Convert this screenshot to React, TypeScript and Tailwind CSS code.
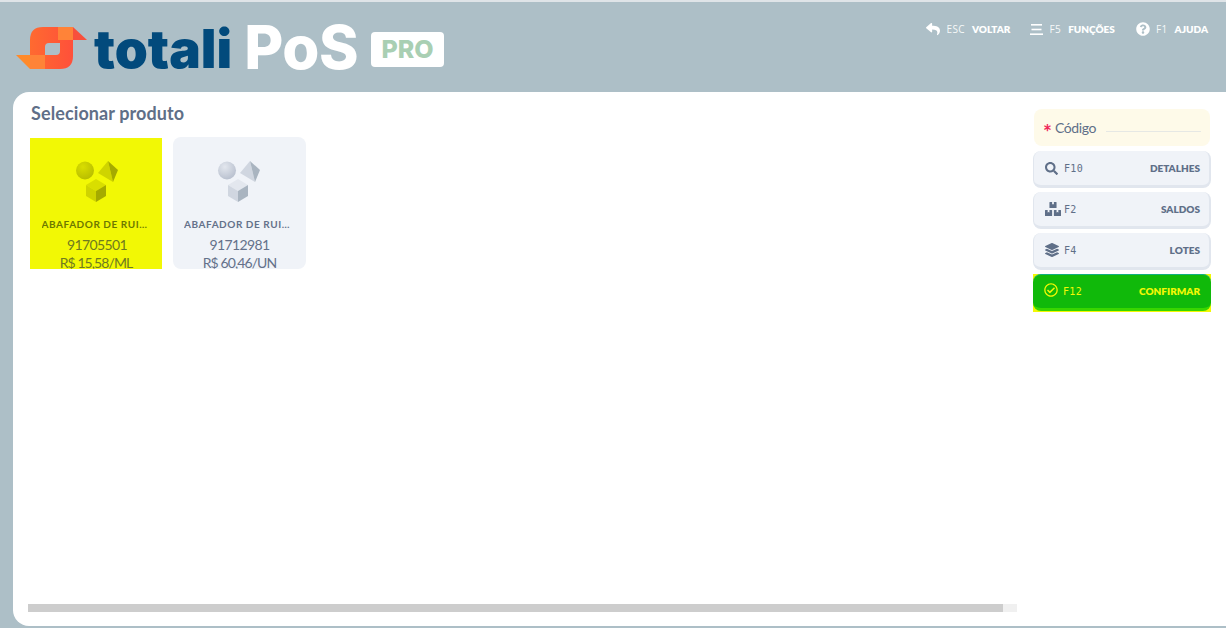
import { FaReply, FaQuestionCircle, FaSearch, FaLayerGroup, FaBoxes, FaRegCheckCircle } from 'react-icons/fa';

const lato = { fontFamily: 'Lato, sans-serif' };

const Shapes = ({ id, sphere, light, mid, dark }: { id: string; sphere: string; light: string; mid: string; dark: string }) => (
  <svg width="44" height="44" viewBox="0 0 44 44">
    <defs>
      <radialGradient id={id} cx="0.38" cy="0.3" r="0.8">
        <stop offset="0" stopColor={light} />
        <stop offset="1" stopColor={sphere} />
      </radialGradient>
    </defs>
    <circle cx="11" cy="10.5" r="9" fill={`url(#${id})`} />
    <polygon points="34,1 24,13 39,22" fill={mid} />
    <polygon points="34,1 44,10 39,22" fill={dark} />
    <polygon points="22,19 32,25 22,31 12,25" fill={light} />
    <polygon points="12,25 22,31 22,42 12,36" fill={mid} />
    <polygon points="32,25 22,31 22,42 32,36" fill={dark} />
  </svg>
);

const ProductCard = ({ code, price, selected }: { code: string; price: string; selected?: boolean }) => (
  <div
    className={
      selected
        ? 'mt-px flex h-[131px] w-[132px] flex-col items-center overflow-hidden bg-[#f2f805] text-[#6f7a20]'
        : 'flex h-[132px] w-[133px] flex-col items-center overflow-hidden rounded-lg bg-[#f0f3f8] text-[#64718a]'
    }
  >
    <div className={selected ? 'mt-[22px] h-[44px] shrink-0' : 'mt-[23px] ml-[-3px] h-[44px] shrink-0'}>
      {selected ? (
        <Shapes id="sel" sphere="#b5ba00" light="#d9de00" mid="#cfd400" dark="#a5aa00" />
      ) : (
        <Shapes id="nor" sphere="#b4bccb" light="#e3e7ee" mid="#d0d6e0" dark="#a9b4c0" />
      )}
    </div>
    <div className={`mt-[13px] w-[112px] shrink-0 truncate text-center text-[10px] font-bold leading-[14px] tracking-[0.55px] ${selected ? 'ml-[3px] text-[#6d7800]' : 'ml-px text-[#64718a]'}`}>
      ABAFADOR DE RUIDO
    </div>
    <div className={`mt-[5px] shrink-0 text-[14px] leading-[18px] tracking-[-0.65px] ${selected ? 'ml-[2px]' : ''}`}>{code}</div>
    <div className="shrink-0 text-[14px] leading-[18px] tracking-[-0.9px]">{price}</div>
  </div>
);

const ActionButton = ({ icon, fkey, label, confirm }: { icon: React.ReactNode; fkey: string; label: string; confirm?: boolean }) => (
  <div className={confirm ? 'h-[38px] w-[178px] bg-[#f2f805]' : 'h-[37px] w-[178px]'}>
    <div
      className={
        confirm
          ? 'flex h-[37px] items-center rounded-lg border-t border-[#10b080] border-b-[3px] border-b-[#38d600] bg-[#10b90a] pl-[11px] pr-[11px] text-[#f2f805]'
          : 'flex h-[37px] items-center rounded-lg border-r-2 border-b-[3px] border-l border-[#e1e6ee] bg-[#f0f3f8] pl-[11px] pr-[9px] text-[#5f6f88]'
      }
    >
      <span className="flex w-[19px] shrink-0 items-center text-[14px]">{icon}</span>
      <span className="text-[10px] tracking-[0.3px]" style={{ fontFamily: '"DejaVu Sans Mono", monospace' }}>{fkey}</span>
      <span className="ml-auto text-[10px] font-extrabold">{label}</span>
    </div>
  </div>
);

const HeaderAction = ({ icon, fkey, label }: { icon: React.ReactNode; fkey: string; label: string }) => (
  <div className="flex items-center text-[10px] leading-none text-white">
    <span className="mr-[6px] flex items-center text-[14px]">{icon}</span>
    <span className="mr-[7px] tracking-[0.4px] opacity-90" style={{ fontFamily: '"Open Sans", sans-serif' }}>{fkey}</span>
    <span className="font-extrabold">{label}</span>
  </div>
);

const Logo = () => (
  <div className="flex items-start">
    <svg width="72" height="44" viewBox="0 0 72 44" className="ml-[-2px] mt-[9px] shrink-0">
      <defs>
        <linearGradient id="logoG" x1="0" y1="0" x2="1" y2="0">
          <stop offset="0" stopColor="#ff6a30" />
          <stop offset="1" stopColor="#ff503a" />
        </linearGradient>
      </defs>
      <path
        fillRule="evenodd"
        fill="url(#logoG)"
        d="M15 14 Q15 1 28 1 L58 1 L58 30 Q58 43 45 43 L15 43 Z M30 21 Q30 17 34 17 L45 17 L45 25 Q45 29 41 29 L30 29 Z"
      />
      <polygon points="1,29 15,29 15,43" fill="#ff8a2a" />
      <rect x="15" y="29" width="15" height="14" fill="#ff8338" />
      <rect x="43" y="1" width="15" height="13" fill="#ff8338" />
      <polygon points="58,1 72,14 58,14" fill="#f8503c" />
    </svg>
    <span className="ml-[7px] mt-[6px] text-[53px] font-black leading-none text-[#024a7c]" style={{ fontFamily: 'Inter, sans-serif' }}>totali</span>
    <span className="ml-[12px] text-[60px] font-extrabold leading-none tracking-[-0.5px] text-white" style={{ fontFamily: 'Inter, sans-serif' }}>PoS</span>
    <span className="ml-[13px] mt-[15px] flex h-[35px] w-[73px] items-center justify-center rounded bg-white text-[25px] font-extrabold text-[#a9cfb3]" style={{ fontFamily: 'Inter, sans-serif' }}>PRO</span>
  </div>
);

export default function App() {
  return (
    <div className="flex h-[628px] w-full flex-col overflow-hidden bg-[#adbfc7]" style={lato}>
      <div className="h-[2px] bg-[#dfe4e8]" />
      <header className="flex h-[90px] shrink-0 items-start justify-between pl-[17px] pr-[18px]">
        <div className="mt-[15px]">
          <Logo />
        </div>
        <div className="mt-[20px] flex items-center gap-[20px]">
          <HeaderAction icon={<FaReply />} fkey="ESC" label="VOLTAR" />
          <HeaderAction
            icon={
              <svg width="13" height="11" viewBox="0 0 13 11" fill="white">
                <rect x="1" y="0" width="11" height="1.6" />
                <rect x="1.5" y="4.7" width="10" height="1.6" />
                <rect x="0" y="9.4" width="13" height="1.6" />
              </svg>
            }
            fkey="F5"
            label="FUNÇÕES"
          />
          <div className="ml-px">
            <HeaderAction icon={<FaQuestionCircle />} fkey="F1" label="AJUDA" />
          </div>
        </div>
      </header>

      <main className="ml-[13px] flex h-[534px] shrink-0 rounded-l-2xl bg-white">
        <section className="flex w-[1020px] shrink-0 flex-col pl-[17px]">
          <h1 className="mt-[9px] pl-px text-[18px] font-bold leading-[25px] tracking-[0.1px] text-[#5f6f88]">Selecionar produto</h1>
          <div className="mt-[11px] flex items-start gap-[11px]">
            <ProductCard code="91705501" price="R$ 15,58/ML" selected />
            <ProductCard code="91712981" price="R$ 60,46/UN" />
          </div>
          <div className="mb-[14px] ml-[-2px] mt-auto h-2 w-[989px] bg-[#f0f0f0]">
            <div className="h-2 w-[975px] bg-[#cdcdcd]" />
          </div>
        </section>

        <aside className="flex flex-col pt-[17px]">
          <div className="mb-[5px] ml-px flex h-[37px] w-[176px] items-center rounded-lg bg-[#fefae9] pl-[9px] pr-[9px]">
            <span className="mr-[3px] mt-[7px] text-[21px] font-bold leading-none text-[#f0285a]">*</span>
            <span className="text-[14px] tracking-[-0.4px] text-[#5f6f88]">Código</span>
            <span className="ml-[10px] mt-[8px] h-px flex-1 bg-[#e6e8e4]" />
          </div>
          <div className="flex flex-col gap-[4px]">
            <ActionButton icon={<FaSearch className="text-[13px]" />} fkey="F10" label="DETALHES" />
            <ActionButton icon={<FaBoxes className="text-[16px]" />} fkey="F2" label="SALDOS" />
            <ActionButton icon={<FaLayerGroup className="text-[14px]" />} fkey="F4" label="LOTES" />
            <ActionButton icon={<FaRegCheckCircle className="-mt-[4px] text-[14px]" />} fkey="F12" label="CONFIRMAR" confirm />
          </div>
        </aside>
      </main>
    </div>
  );
}
